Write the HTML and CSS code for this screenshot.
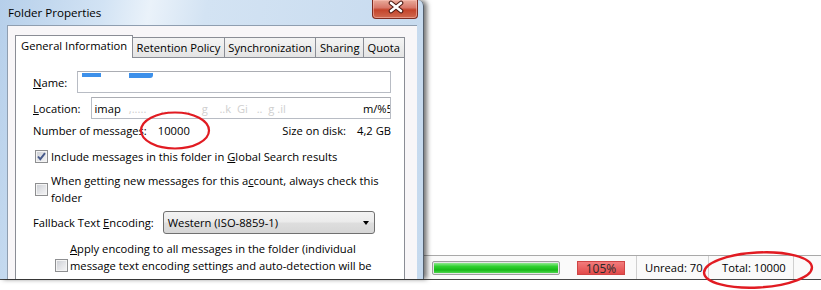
FILE: index.html
```html
<!DOCTYPE html>
<html lang="en">
<head>
  <meta charset="UTF-8">
  <title>Folder Properties</title>
  <link rel="stylesheet" href="styles.css">
</head>
<body>
  <div class="screen">
    <div class="desktop"></div>

    <!-- status bar of the mail window behind the dialog -->
    <div class="status-bar">
      <div class="status-cell cell-progress">
        <span class="progress"><span class="progress-fill"></span></span>
      </div>
      <div class="status-cell cell-quota"><span class="quota-box">105%</span></div>
      <div class="status-cell cell-unread">Unread: 70</div>
      <div class="status-cell cell-total">Total: 10000</div>
      <div class="status-cell cell-end"></div>
    </div>
    <div class="below"></div>

    <!-- the dialog window -->
    <div class="dialog">
      <div class="titlebar">
        <span class="title">Folder Properties</span>
        <span class="close-btn">
          <svg width="46" height="19" viewBox="0 0 46 19">
            <path d="M19 4 L29 12 M29 4 L19 12" stroke="#4a1710" stroke-width="4.6" stroke-linecap="round"/>
            <path d="M19 4 L29 12 M29 4 L19 12" stroke="#ffffff" stroke-width="2.6" stroke-linecap="round"/>
          </svg>
        </span>
      </div>

      <div class="client">
        <ul class="tabs">
          <li class="tab active">General Information</li>
          <li class="tab">Retention Policy</li>
          <li class="tab">Synchronization</li>
          <li class="tab">Sharing</li>
          <li class="tab">Quota</li>
        </ul>

        <div class="tab-panel">
          <div class="field-row row-name">
            <span class="label"><u>N</u>ame:</span>
            <div class="textbox">
              <span class="blur blur-a"></span>
              <span class="blur blur-b"></span>
            </div>
          </div>

          <div class="field-row row-location">
            <span class="label"><u>L</u>ocation:</span>
            <div class="textbox">
              <span>imap</span>
              <span class="faint">,.....&nbsp;&nbsp;&nbsp;&nbsp;&nbsp;...&nbsp;&nbsp;&nbsp;&nbsp;&nbsp;..&nbsp;&nbsp;&nbsp;&nbsp;g&nbsp;&nbsp;&nbsp;&nbsp;..k&nbsp;&nbsp;Gi&nbsp;&nbsp;&nbsp;..&nbsp;&nbsp;g&nbsp;.il</span>
              <span class="tail">m/%5</span>
            </div>
          </div>

          <div class="info-row">
            <div class="info-pair">
              <span>Number of messages:</span>
              <span>10000</span>
            </div>
            <div class="info-pair">
              <span>Size on disk:</span>
              <span>4,2 GB</span>
            </div>
          </div>

          <div class="check-row row-global">
            <span class="checkbox checked">
              <svg width="11" height="11" viewBox="0 0 11 11">
                <path d="M2 5.5 L4.3 8.2 L9 2.2" fill="none" stroke="#46598a" stroke-width="1.9"/>
              </svg>
            </span>
            <span class="check-text">Include messages in this folder in <u>G</u>lobal Search results</span>
          </div>

          <div class="check-row row-always">
            <span class="checkbox"></span>
            <span class="check-text">When getting new messages for this a<u>c</u>count, always check this folder</span>
          </div>

          <div class="field-row row-encoding">
            <span class="label">Fallback Text <u>E</u>ncoding:</span>
            <div class="select">
              <span>Western (ISO-8859-1)</span>
              <span class="arrow"></span>
            </div>
          </div>

          <div class="check-row row-apply">
            <span class="checkbox"></span>
            <span class="check-text"><u>A</u>pply encoding to all messages in the folder (individual message text encoding settings and auto-detection will be ignored)</span>
          </div>
        </div>
      </div>
    </div>

    <!-- red hand-drawn marks -->
    <svg class="marks" width="821" height="290" viewBox="0 0 821 290">
      <ellipse cx="175" cy="130.5" rx="34" ry="18" fill="none" stroke="#e11b22" stroke-width="2.2"/>
      <ellipse cx="758" cy="270" rx="54" ry="17.5" transform="rotate(-3 758 270)" fill="none" stroke="#e11b22" stroke-width="2.4"/>
    </svg>
  </div>
</body>
</html>
```

FILE: styles.css
```css
* {
  box-sizing: border-box;
}

body {
  margin: 0;
  background: #fff;
  font-family: "Open Sans", "Noto Sans", sans-serif;
  font-size: 11.2px;
  color: #000;
}

.screen {
  position: relative;
  width: 821px;
  height: 290px;
  overflow: hidden;
  display: flex;
  flex-direction: column;
  background: #fff;
}

.desktop {
  height: 255px;
}

.below {
  flex: 1;
}

/* status bar */
.status-bar {
  display: flex;
  height: 25px;
  border-top: 1px solid #a9a9a9;
  border-bottom: 1px solid #474747;
  background: #fafafa;
}

.status-cell {
  display: flex;
  align-items: center;
  white-space: nowrap;
}

.cell-progress {
  flex: 1;
  justify-content: flex-end;
  padding-right: 6px;
}

.progress {
  width: 128px;
  height: 14px;
  border: 1px solid #9d9d9d;
  border-radius: 2px;
  padding: 1px;
  background: #e6e6e6;
}

.progress-fill {
  display: block;
  height: 100%;
  background: linear-gradient(#8ee88e 0%, #2fd02f 35%, #16b816 70%, #4fd64f 100%);
}

.cell-quota {
  width: 70px;
  justify-content: center;
}

.quota-box {
  width: 48px;
  height: 14px;
  line-height: 13px;
  text-align: center;
  font-size: 12px;
  color: #2a2a2a;
  background: linear-gradient(#f27c7c, #e24a4a);
  border: 1px solid #cf4545;
}

.cell-unread {
  width: 72px;
  padding-left: 8px;
  border-left: 1px solid #d0d0d0;
}

.cell-total {
  width: 85px;
  padding-left: 13px;
  border-left: 1px solid #d0d0d0;
}

.cell-end {
  width: 28px;
  border-left: 1px solid #d0d0d0;
}

/* dialog window */
.dialog {
  position: absolute;
  top: 0;
  left: 0;
  width: 424px;
  height: 279px;
  display: flex;
  flex-direction: column;
  background: linear-gradient(100deg, #b6cfea 0%, #d2e3f4 22%, #eaf2fa 32%, #d3e3f3 44%, #c5d9ee 100%);
  border-right: 1px solid #55606d;
  border-top-right-radius: 6px;
  box-shadow: 3px 0 5px rgba(0, 0, 0, 0.55);
}

.titlebar {
  height: 25px;
  flex: none;
  display: flex;
  justify-content: space-between;
  padding-left: 8px;
}

.title {
  margin-top: 5px;
  font-size: 11.6px;
}

.close-btn {
  width: 46px;
  height: 19px;
  margin-right: 5px;
  border: 1px solid #7d2c21;
  border-top: none;
  border-radius: 0 0 4px 4px;
  background: linear-gradient(#e9ab9b 0%, #d8786a 42%, #c4442b 55%, #d06a50 100%);
  box-shadow: inset 0 0 0 1px rgba(255, 200, 190, 0.5);
}

.close-btn svg {
  display: block;
  margin: -1px 0 0 -1px;
}

.client {
  flex: 1;
  margin: 0 6px 0 7px;
  border-left: 1px solid #8f9eb0;
  border-top: 1px solid #8f9eb0;
  background: #f8f6f8;
  padding: 9px 12px 0 7px;
  overflow: hidden;
}

/* tabs */
.tabs {
  list-style: none;
  margin: 0;
  padding: 0;
  height: 22px;
  display: flex;
  align-items: flex-end;
}

.tab {
  height: 20px;
  line-height: 19px;
  padding: 0 3.5px;
  margin-right: -1px;
  border: 1px solid #8a8d95;
  border-bottom: none;
  background: linear-gradient(#f4f4f4, #e4e4e4);
  white-space: nowrap;
}

.tab.active {
  position: relative;
  z-index: 1;
  height: 23px;
  margin-bottom: -1px;
  line-height: 19px;
  padding: 0 5px;
  background: #fff;
}

.tab-panel {
  height: 240px;
  border: 1px solid #8a8d95;
  background: #fff;
  padding: 13px 13px 0 17px;
}

/* rows */
.field-row {
  display: flex;
  align-items: center;
  gap: 10px;
}

.row-name {
  height: 22px;
}

.row-location {
  height: 22px;
  margin-top: 4px;
}

.textbox {
  flex: 1;
  height: 22px;
  position: relative;
  display: flex;
  align-items: center;
  padding: 0 0 0 3px;
  border: 1px solid #b8bcc4;
  border-top-color: #abadb3;
  background: #fff;
  overflow: hidden;
  white-space: nowrap;
}

.faint {
  flex: 1;
  padding-left: 8px;
  color: #cfcfcf;
  overflow: hidden;
}

.tail {
  margin-right: -3px;
}

.blur {
  position: absolute;
  top: 1px;
  height: 4px;
  background: #3d90ea;
  filter: blur(0.6px);
}

.blur-a {
  left: 4px;
  width: 19px;
}

.blur-b {
  left: 51px;
  width: 24px;
  height: 5px;
  border-radius: 0 0 3px 0;
}

.info-row {
  display: flex;
  justify-content: space-between;
  align-items: center;
  height: 17px;
  margin-top: 3px;
}

.info-pair {
  display: flex;
  gap: 11px;
}

.check-row {
  display: flex;
  align-items: center;
  gap: 3px;
  line-height: 17px;
  padding-left: 2px;
}

.row-global {
  margin-top: 9px;
}

.row-always {
  margin-top: 7px;
}

.row-apply {
  margin-top: 6px;
  padding-left: 22px;
  gap: 2px;
}

.checkbox {
  flex: none;
  width: 13px;
  height: 13px;
  border: 1px solid #8e8f91;
  background: linear-gradient(135deg, #c9ccd2 0%, #e4e5e8 55%, #f5f5f6 100%);
  box-shadow: inset 0 0 0 1px #f4f4f4;
}

.checkbox svg {
  display: block;
}

.row-encoding {
  margin-top: 5px;
  gap: 9px;
}

.select {
  width: 212px;
  height: 23px;
  display: flex;
  align-items: center;
  justify-content: space-between;
  padding: 0 5px 0 4px;
  border: 1px solid #707070;
  border-radius: 3px;
  background: linear-gradient(#f3f3f3 0%, #ebebeb 48%, #dedede 52%, #d6d6d6 100%);
}

.arrow {
  width: 0;
  height: 0;
  border-left: 3.5px solid transparent;
  border-right: 3.5px solid transparent;
  border-top: 4px solid #000;
}

/* annotation marks drawn over everything */
.marks {
  position: absolute;
  top: 0;
  left: 0;
  pointer-events: none;
}
```
